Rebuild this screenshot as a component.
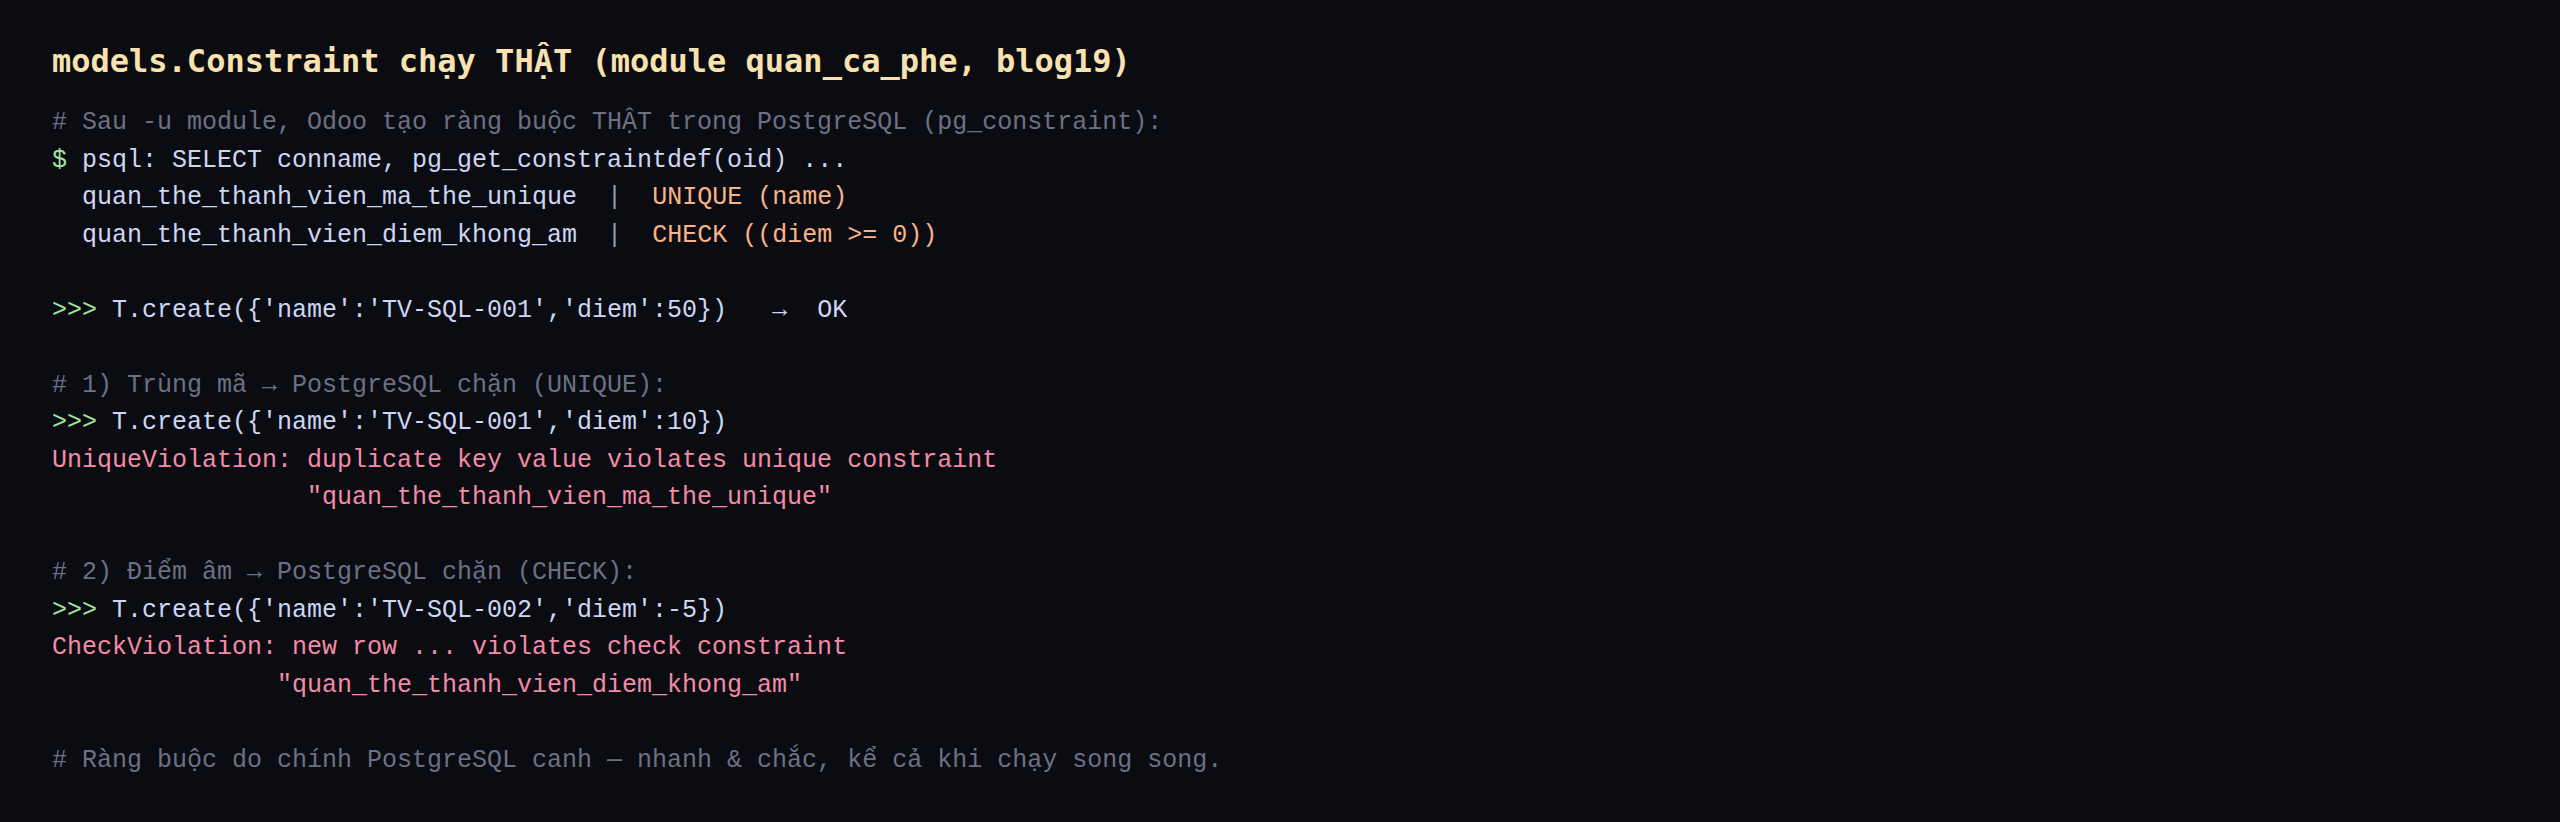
const mono = "font-['Courier_New','Courier','Nimbus_Mono_PS','FreeMono','Liberation_Mono',monospace]";

type Seg = { t: string; c?: string };

const lines: Seg[][] = [
  [{ t: "# Sau -u module, Odoo tạo ràng buộc THẬT trong PostgreSQL (pg_constraint):", c: "text-[#6c7086]" }],
  [{ t: "$", c: "text-[#a6e3a1]" }, { t: " psql: SELECT conname, pg_get_constraintdef(oid) ..." }],
  [{ t: "  quan_the_thanh_vien_ma_the_unique  " }, { t: "|", c: "text-[#9399b2]" }, { t: "  " }, { t: "UNIQUE (name)", c: "text-[#fab387]" }],
  [{ t: "  quan_the_thanh_vien_diem_khong_am  " }, { t: "|", c: "text-[#9399b2]" }, { t: "  " }, { t: "CHECK ((diem >= 0))", c: "text-[#fab387]" }],
  [],
  [{ t: ">>>", c: "text-[#a6e3a1]" }, { t: " T.create({'name':'TV-SQL-001','diem':50})   →  OK" }],
  [],
  [{ t: "# 1) Trùng mã → PostgreSQL chặn (UNIQUE):", c: "text-[#6c7086]" }],
  [{ t: ">>>", c: "text-[#a6e3a1]" }, { t: " T.create({'name':'TV-SQL-001','diem':10})" }],
  [{ t: "UniqueViolation: duplicate key value violates unique constraint", c: "text-[#f38ba8]" }],
  [{ t: '                 "quan_the_thanh_vien_ma_the_unique"', c: "text-[#f38ba8]" }],
  [],
  [{ t: "# 2) Điểm âm → PostgreSQL chặn (CHECK):", c: "text-[#6c7086]" }],
  [{ t: ">>>", c: "text-[#a6e3a1]" }, { t: " T.create({'name':'TV-SQL-002','diem':-5})" }],
  [{ t: "CheckViolation: new row ... violates check constraint", c: "text-[#f38ba8]" }],
  [{ t: '               "quan_the_thanh_vien_diem_khong_am"', c: "text-[#f38ba8]" }],
  [],
  [{ t: "# Ràng buộc do chính PostgreSQL canh — nhanh & chắc, kể cả khi chạy song song.", c: "text-[#6c7086]" }],
];

export default function App() {
  return (
    <div className="min-h-screen w-full bg-[#0b0c11] px-[52px] pt-[43px]">
      <h1 className="font-['DejaVu_Sans_Mono',monospace] text-[32px] leading-[37px] font-bold text-[#f9e2af]">
        models.Constraint chạy THẬT (module quan_ca_phe, blog19)
      </h1>

      <div className={`mt-[24px] ${mono} text-[25px] leading-[37.5px] text-[#cdd6f4] whitespace-pre`}>
        {lines.map((segs, i) => (
          <div key={i} className="h-[37.5px]">
            {segs.map((s, j) => (
              <span key={j} className={s.c}>
                {s.t}
              </span>
            ))}
          </div>
        ))}
      </div>
    </div>
  );
}
